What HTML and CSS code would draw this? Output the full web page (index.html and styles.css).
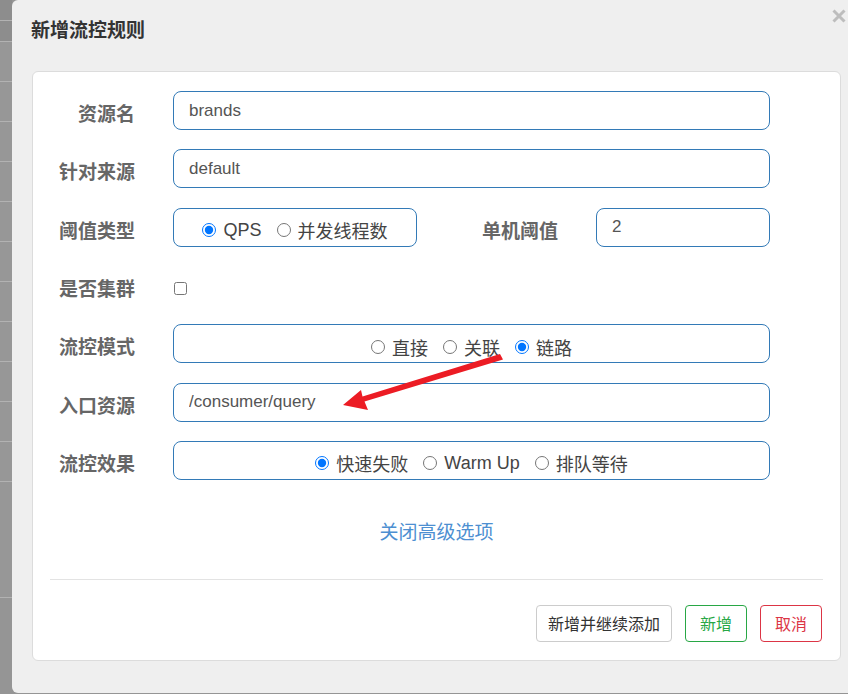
FILE: index.html
```html
<!DOCTYPE html>
<html lang="zh-CN">
<head>
    <meta charset="UTF-8">
    <meta name="viewport" content="width=device-width, initial-scale=1.0">
    <title>新增流控规则</title>
    <link rel="stylesheet" href="styles.css">
</head>
<body>
    <div class="page">
        <div class="backdrop">
            <div class="backdrop-row dark"></div>
            <div class="backdrop-row dark"></div>
            <div class="backdrop-row"></div>
            <div class="backdrop-row"></div>
            <div class="backdrop-row"></div>
            <div class="backdrop-row"></div>
            <div class="backdrop-row"></div>
            <div class="backdrop-row"></div>
            <div class="backdrop-row"></div>
            <div class="backdrop-row"></div>
            <div class="backdrop-row"></div>
            <div class="backdrop-row"></div>
            <div class="backdrop-row"></div>
            <div class="backdrop-row tall"></div>
        </div>

        <div class="modal">
            <div class="modal-header">
                <h4 class="modal-title">新增流控规则</h4>
                <span class="close">
                    <svg width="14" height="14" viewBox="0 0 14 14">
                        <path d="M1.5 1.5 L12.5 12.5 M12.5 1.5 L1.5 12.5" stroke="#bdbdbd" stroke-width="3" fill="none"/>
                    </svg>
                </span>
            </div>

            <div class="modal-body">
                <form class="rule-form">
                    <div class="form-row">
                        <label class="row-label">资源名</label>
                        <input class="field wide" type="text" value="brands">
                    </div>
                    <div class="form-row">
                        <label class="row-label">针对来源</label>
                        <input class="field wide" type="text" value="default">
                    </div>
                    <div class="form-row">
                        <label class="row-label">阈值类型</label>
                        <div class="radio-box narrow">
                            <label class="radio"><input type="radio" name="grade" checked> QPS</label>
                            <label class="radio"><input type="radio" name="grade"> 并发线程数</label>
                        </div>
                        <label class="row-label second">单机阈值</label>
                        <input class="field short" type="text" value="2">
                    </div>
                    <div class="form-row">
                        <label class="row-label">是否集群</label>
                        <input class="check" type="checkbox">
                    </div>
                    <div class="form-row">
                        <label class="row-label">流控模式</label>
                        <div class="radio-box wide">
                            <label class="radio"><input type="radio" name="strategy"> 直接</label>
                            <label class="radio"><input type="radio" name="strategy"> 关联</label>
                            <label class="radio"><input type="radio" name="strategy" checked> 链路</label>
                        </div>
                    </div>
                    <div class="form-row">
                        <label class="row-label">入口资源</label>
                        <input class="field wide" type="text" value="/consumer/query">
                    </div>
                    <div class="form-row">
                        <label class="row-label">流控效果</label>
                        <div class="radio-box wide">
                            <label class="radio"><input type="radio" name="behavior" checked> 快速失败</label>
                            <label class="radio"><input type="radio" name="behavior"> Warm Up</label>
                            <label class="radio"><input type="radio" name="behavior"> 排队等待</label>
                        </div>
                    </div>
                </form>

                <div class="advanced"><a href="#">关闭高级选项</a></div>

                <hr class="divider">

                <div class="modal-footer">
                    <button class="btn btn-default">新增并继续添加</button>
                    <button class="btn btn-success">新增</button>
                    <button class="btn btn-danger">取消</button>
                </div>
            </div>
        </div>

        <!-- red annotation arrow drawn on top of the screenshot -->
        <svg class="annotation" width="848" height="694" viewBox="0 0 848 694">
            <polygon points="500,354 503,359.5 364.5,401.5 368,410 343,405 361,390 362.5,396.5" fill="#ec1c24"/>
        </svg>
    </div>
</body>
</html>
```

FILE: styles.css
```css
body {
    margin: 0;
    padding: 0;
    font-family: "Liberation Sans", "Noto Sans CJK SC", sans-serif;
    background: #959595;
}

.page {
    position: relative;
    display: flex;
    width: 848px;
    height: 694px;
    overflow: hidden;
}

.backdrop {
    width: 12px;
    flex-shrink: 0;
    display: flex;
    flex-direction: column;
}

.backdrop-row {
    height: 39px;
    border-bottom: 1px solid #b2b2b2;
    background: #979797;
}

.backdrop-row.dark {
    height: 20px;
    background: #8d8d8d;
}

.backdrop-row.tall {
    height: 115px;
}

.modal {
    width: 836px;
    height: 693px;
    background: #efefef;
    border-radius: 6px 0 0 6px;
}

.modal-header {
    height: 62px;
    display: flex;
    justify-content: space-between;
    margin-bottom: 9px;
}

.modal-title {
    margin: 0;
    padding-left: 19px;
    font-size: 19px;
    font-weight: bold;
    color: #333;
    line-height: 62px;
}

.close {
    margin-top: 9px;
    margin-right: 2px;
    height: 14px;
}

.modal-body {
    width: 807px;
    margin-left: 20px;
    background: #fff;
    border: 1px solid #dcdcdc;
    border-radius: 6px;
    padding: 19px 0 18px;
}

.rule-form {
    display: flex;
    flex-direction: column;
    gap: 19.33px;
    margin: 0;
}

.form-row {
    display: flex;
    align-items: center;
    height: 39px;
}

.row-label {
    width: 102px;
    flex-shrink: 0;
    text-align: right;
    margin-right: 38px;
    font-size: 19px;
    font-weight: bold;
    color: #666;
    padding-top: 4px;
}

.row-label.second {
    width: 141px;
}

.field {
    box-sizing: border-box;
    height: 39px;
    border: 1px solid #337ab7;
    border-radius: 8px;
    padding: 0 15px;
    font-family: inherit;
    font-size: 17px;
    color: #555;
    outline: none;
}

.field.wide {
    width: 597px;
}

.field.short {
    width: 174px;
}

.radio-box {
    box-sizing: border-box;
    height: 39px;
    border: 1px solid #337ab7;
    border-radius: 8px;
    display: flex;
    align-items: center;
    justify-content: center;
    gap: 15px;
    padding-top: 6px;
}

.radio-box.narrow {
    width: 244px;
}

.radio-box.wide {
    width: 597px;
}

.radio {
    display: flex;
    align-items: center;
    gap: 7px;
    font-size: 18px;
    color: #444;
}

.radio input {
    margin: 0;
    width: 14px;
    height: 14px;
}

.check {
    margin: 6px 0 0 1px;
    width: 13px;
    height: 13px;
}

.advanced {
    margin-top: 40px;
    height: 26px;
    line-height: 26px;
    text-align: center;
}

.advanced a {
    font-size: 19px;
    color: #4d8fd1;
    text-decoration: none;
}

.divider {
    margin: 33px 17px 0;
    border: 0;
    border-top: 1px solid #e3e3e3;
}

.modal-footer {
    margin-top: 25px;
    display: flex;
    justify-content: flex-end;
    gap: 13px;
    padding-right: 18px;
}

.btn {
    height: 37px;
    padding: 0 14px;
    background: #fff;
    border-radius: 4px;
    font-family: inherit;
    font-size: 16px;
    cursor: pointer;
}

.btn-default {
    border: 1px solid #ccc;
    color: #333;
    padding: 0 11px;
}

.btn-success {
    border: 1px solid #28a745;
    color: #28a745;
}

.btn-danger {
    border: 1px solid #dc3545;
    color: #dc3545;
}

.annotation {
    position: absolute;
    top: 0;
    left: 0;
    pointer-events: none;
}
```
